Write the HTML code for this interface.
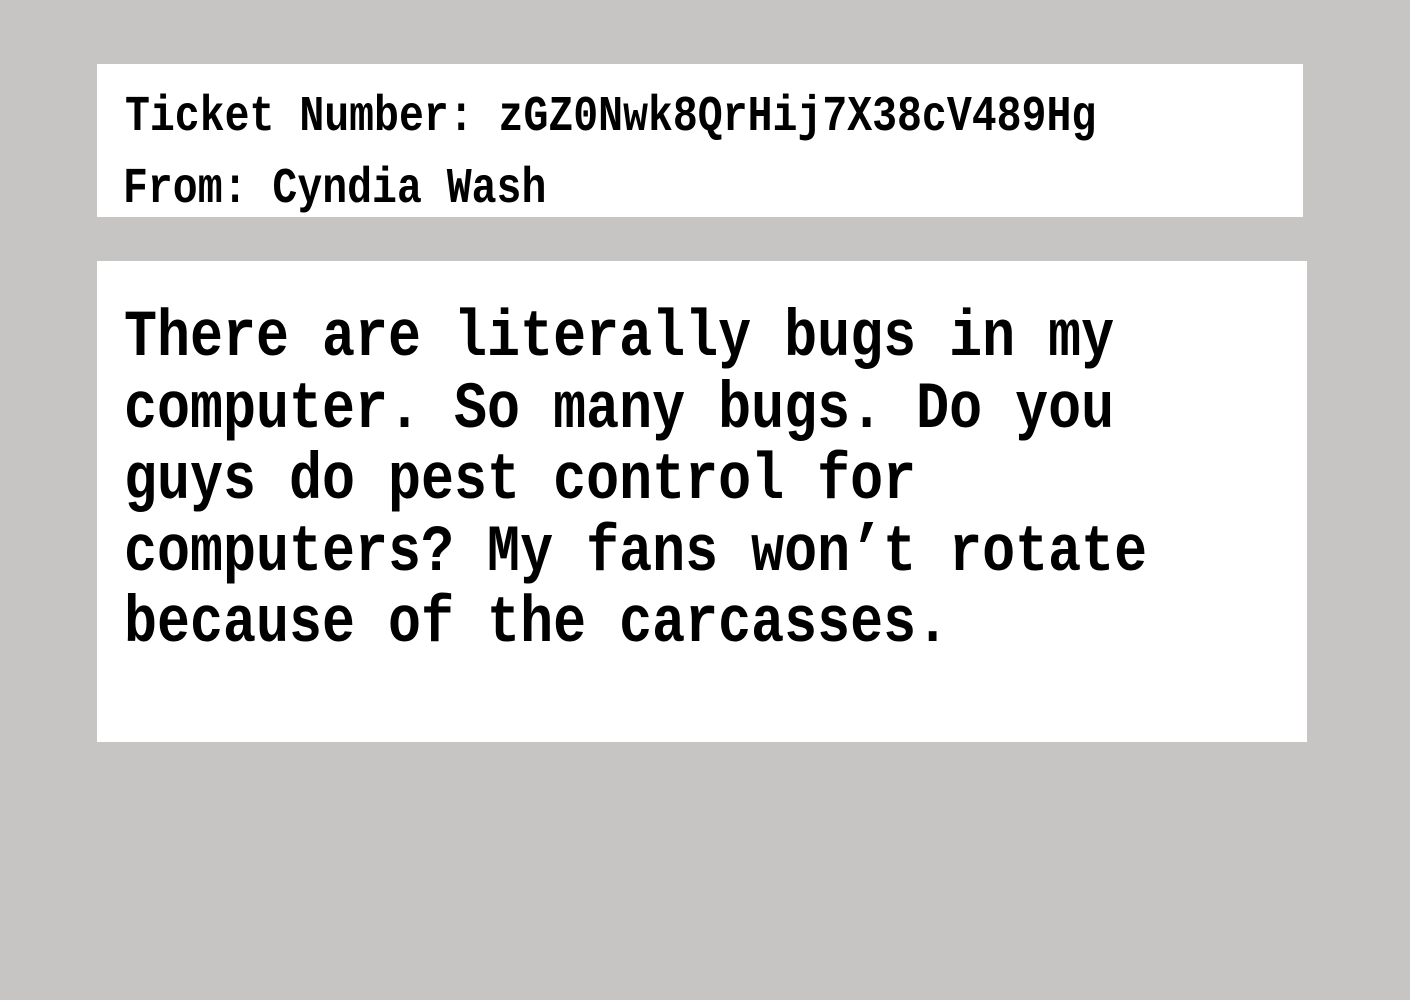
<!DOCTYPE html>
<html><head><meta charset="utf-8"><style>
html,body{margin:0;padding:0;}
body{width:1410px;height:1000px;background:#c6c5c3;position:relative;overflow:hidden;font-family:"Liberation Mono",monospace;font-weight:bold;color:#000;}
.p{position:absolute;background:#fff;}
.l{position:absolute;white-space:pre;line-height:1em;height:1em;transform-origin:0 76.5%;}
.h{font-size:41.5px;transform:scaleY(1.2);}
.b{font-size:55px;transform:scaleY(1.2);}
</style></head><body>
<div class="p" style="left:97px;top:64px;width:1206px;height:153px"></div>
<div class="p" style="left:97px;top:261px;width:1210px;height:481px"></div>
<div class="l h" style="left:125px;top:99px">Ticket Number: zGZ0Nwk8QrHij7X38cV489Hg</div>
<div class="l h" style="left:123px;top:171px">From: Cyndia Wash</div>
<div class="l b" style="left:124px;top:313px">There are literally bugs in my</div>
<div class="l b" style="left:124px;top:384.5px">computer. So many bugs. Do you</div>
<div class="l b" style="left:124px;top:456px">guys do pest control for</div>
<div class="l b" style="left:124px;top:527.5px">computers? My fans won’t rotate</div>
<div class="l b" style="left:124px;top:599px">because of the carcasses.</div>
</body></html>
